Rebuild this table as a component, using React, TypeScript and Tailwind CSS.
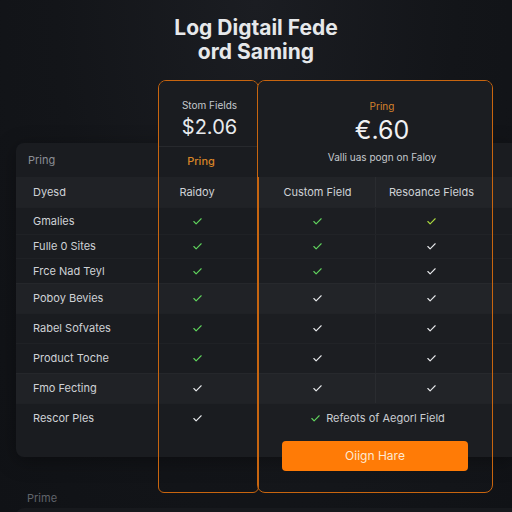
import React from "react";
import { Check } from "lucide-react";

type Mark = "g" | "l" | "w";

type Row = {
  label: string;
  h: string;
  band?: boolean;
  marks: Mark[];
  note?: string;
};

const tickColor: Record<Mark, string> = {
  g: "text-[#5fd35c]",
  l: "text-[#a9d83c]",
  w: "text-[#e6e8eb]",
};

const rows: Row[] = [
  { label: "Gmalies", h: "h-[27px]", marks: ["g", "g", "l"] },
  { label: "Fulle 0 Sites", h: "h-[24px]", marks: ["g", "g", "w"] },
  { label: "Frce Nad Teyl", h: "h-[25px]", marks: ["g", "g", "w"] },
  { label: "Poboy Bevies", h: "h-[30px]", band: true, marks: ["g", "w", "w"] },
  { label: "Rabel Sofvates", h: "h-[30px]", marks: ["g", "w", "w"] },
  { label: "Product Toche", h: "h-[30px]", marks: ["g", "w", "w"] },
  { label: "Fmo Fecting", h: "h-[30px]", band: true, marks: ["w", "w", "w"] },
  { label: "Rescor Ples", h: "h-[30px]", marks: ["w"], note: "Refeots of Aegorl Field" },
];

function Tick({ m }: { m: Mark }) {
  return <Check className={`w-[11px] h-[11px] ${tickColor[m]}`} strokeWidth={2.4} />;
}

export default function App() {
  return (
    <div className="relative w-full min-h-[512px] h-[512px] overflow-hidden bg-[radial-gradient(ellipse_at_50%_0%,#1b1d22_0%,#131519_55%,#101216_100%)] font-[Inter,sans-serif] text-[#d3d6da]">
      {/* Title */}
      <h1 className="pt-[16px] h-[80px] text-center text-[21px] leading-[24px] font-bold text-[#e6e8ea]">
        Log Digtail Fede
        <br />
        ord Saming
      </h1>

      {/* Comparison */}
      <div className="relative">
        <div className="h-[63px]" />

        {/* Back table */}
        <div className="ml-[16px] bg-[#1a1c20] rounded-l-[8px] shadow-[0_4px_20px_rgba(0,0,0,0.35)]">
          {/* header label row */}
          <div className="flex items-center h-[34px] text-[11px]">
            <div className="w-[142px] pl-[12px] text-[#8a8e95]">Pring</div>
            <div className="w-[78px] pl-[8px] pt-[3px] text-center text-[#d88427] font-medium">Pring</div>
          </div>

          {/* column titles */}
          <div className="flex items-center h-[30px] bg-[#202226] text-[11px] text-[#cfd2d6]">
            <div className="w-[142px] pl-[17px]">Dyesd</div>
            <div className="w-[78px] text-center">Raidoy</div>
            <div className="w-[24px]" />
            <div className="w-[115px] text-center">Custom Field</div>
            <div className="w-[112px] h-full flex items-center justify-center border-l border-white/[0.04]">
              Resoance Fields
            </div>
          </div>

          {rows.map((r) => (
            <div
              key={r.label}
              className={`flex items-center ${r.h} ${r.band ? "bg-[#202226]" : ""} border-t border-white/[0.025] text-[11px] text-[#cfd2d6]`}
            >
              <div className="w-[142px] pl-[17px]">{r.label}</div>
              <div className="w-[78px] flex justify-center">
                <Tick m={r.marks[0]} />
              </div>
              <div className="w-[24px]" />
              {r.note ? (
                <div className="w-[227px] pl-[8px] flex items-center justify-center gap-[5px] text-[#c9ccd1]">
                  <Tick m="g" />
                  <span>{r.note}</span>
                </div>
              ) : (
                <>
                  <div className="w-[115px] flex justify-center">
                    <Tick m={r.marks[1]} />
                  </div>
                  <div className="w-[112px] h-full flex items-center justify-center border-l border-white/[0.04]">
                    <Tick m={r.marks[2]} />
                  </div>
                </>
              )}
            </div>
          ))}
          <div className="h-[24px]" />
        </div>

        <p className="mt-[35px] pl-[27px] text-[11px] leading-[12px] text-[#60646b]">Prime</p>
        <div className="mt-[4px] ml-[16px] h-[20px] bg-[#17191d] rounded-tl-[8px]" />

        {/* Highlight card 1 */}
        <div className="absolute left-[158px] top-0 w-[101px] h-[413px] border-[1.5px] border-[#c8650f] rounded-t-[8px] rounded-b-[6px] pointer-events-none flex flex-col">
          <div className="h-[66px] bg-[#1a1c20] rounded-t-[7px] border-b border-white/[0.06] flex flex-col items-center pt-[18px] pl-[2px]">
            <span className="text-[10px] leading-[12px] text-[#c5c9ce]">Stom Fields</span>
            <span className="mt-[5px] text-[20px] leading-[22px] text-[#e8eaed]">$2.06</span>
          </div>
        </div>

        {/* Highlight card 2 */}
        <div className="absolute left-[257px] top-0 w-[236px] h-[413px] border-[1.5px] border-[#c8650f] rounded-[8px] bg-white/[0.012] flex flex-col">
          <div className="h-[96px] bg-[#1b1d21] rounded-t-[7px] flex flex-col items-center pt-[19px] pl-[14px]">
            <span className="text-[10px] leading-[12px] text-[#d6822c]">Pring</span>
            <span className="mt-[4px] text-[25px] leading-[28px] text-[#f0f1f3]">€.60</span>
            <span className="mt-[7px] text-[10px] leading-[12px] text-[#c5c9ce]">Valli uas pogn on Faloy</span>
          </div>
          <div className="flex-1" />
          <button className="mx-[24px] mb-[21px] h-[30px] rounded-[4px] bg-[#ff7b06] text-[12px] text-[#fde9d3]">
            Oiign Hare
          </button>
        </div>
      </div>
    </div>
  );
}
